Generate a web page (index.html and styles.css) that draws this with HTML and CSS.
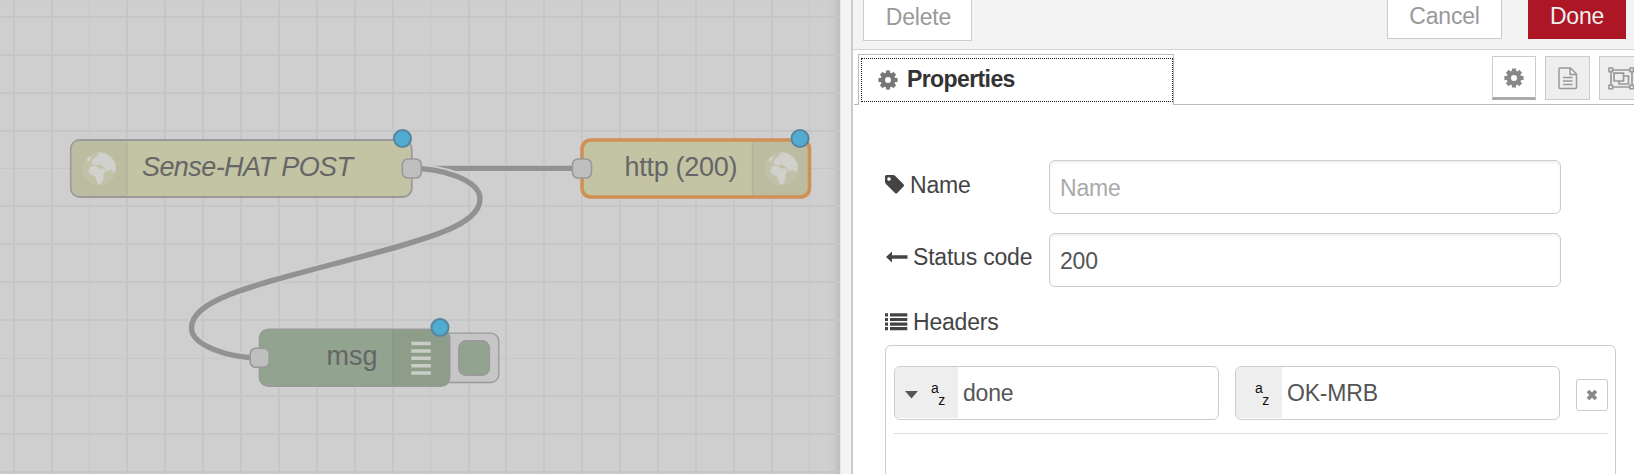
FILE: index.html
```
<!DOCTYPE html>
<html lang="en">
<head>
<meta charset="utf-8">
<title>Edit http response node</title>
<link rel="stylesheet" href="styles.css">
</head>
<body>
<div class="editor">
  <main class="workspace">
    <svg class="flow" width="840" height="474" viewBox="0 0 840 474">
      <defs>
        <g id="globe">
          <circle r="16.2" fill="#c1c1a8" stroke="#c8c8b8" stroke-width="1" stroke-dasharray="2 2"/>
          <path fill="#d1d1cc" d="M-10 -1L-7 -3-2 -2-1 0 5 0 6 3 4 6 4 10 2 15-1 16-3 12-4 8-9 6-11 3ZM-8 -5L-7 -9-3 -12 0 -16 6 -15 12 -11 16 -5 16 2 13 4 12 1 8 3 5 -1 0 -4-4 -3ZM-13 -8L-10 -12-8 -11-11 -7Z"/>
        </g>
        <g id="changed"><circle r="8.5" fill="#50acd0" stroke="#5784a0" stroke-width="2"/></g>
        <rect id="port" x="-9.5" y="-9.5" width="19" height="19" rx="5.5" fill="#bfbfbf" stroke="#999" stroke-width="1.6"/>
      </defs>
      <path class="grid" d="M14 0V474M52 0V474M127 0V474M165 0V474M203 0V474M241 0V474M279 0V474M317 0V474M355 0V474M393 0V474M469 0V474M506 0V474M544 0V474M582 0V474M620 0V474M658 0V474M696 0V474M734 0V474M772 0V474M0 17H840M0 55H840M0 93H840M0 131H840M0 206H840M0 244H840M0 282H840M0 320H840M0 396H840M0 434H840M0 472H840"/>
      <path class="grid thin" d="M89.5 0V474M430.5 0V474M809.5 0V474M0 168.5H840M0 358.5H840"/>
      <path class="wire-gap" d="M412 168.4H582"/><path class="wire" d="M412 168.4H582"/>
      <path class="wire-gap" d="M412 168.4C440 168.4 480 179 480 199C480 226 425 240 335.6 263.5C246 287 191.5 301 191.5 328C191.5 346 230 358 260 358"/>
      <path class="wire" d="M412 168.4C440 168.4 480 179 480 199C480 226 425 240 335.6 263.5C246 287 191.5 301 191.5 328C191.5 346 230 358 260 358"/>

      <rect x="70.8" y="140" width="341" height="57" rx="9" fill="#c3c4a4" stroke="#999" stroke-width="1.8"/>
      <path d="M127 141H80Q71.7 141 71.7 149V188Q71.7 196 80 196H127Z" fill="#bcbda0"/><path d="M127 142V195" stroke="#b2b39a" stroke-width="1.6"/>
      <use href="#globe" x="99.5" y="168.5"/>
      <text class="italic" x="142" y="176" textLength="211">Sense-HAT POST</text>
      <use href="#port" x="411.8" y="168.5"/><use href="#changed" x="402.5" y="138.5"/>

      <rect x="582" y="140" width="227.5" height="57" rx="9" fill="#c3c4a4"/>
      <path d="M752 141H801Q808 141 808 149V188Q808 196 801 196H752Z" fill="#bcbda0"/><path d="M752.5 142V195" stroke="#b2b39a" stroke-width="1.6"/>
      <rect x="582" y="140" width="227.5" height="57" rx="9" fill="none" stroke="#d09055" stroke-width="3.6"/>
      <use href="#globe" x="781.5" y="168.5"/>
      <text x="624.5" y="176" textLength="113">http (200)</text>
      <use href="#port" x="582" y="168.5"/><use href="#changed" x="800" y="138.5"/>

      <rect x="430" y="333.2" width="68.8" height="49.3" rx="8" fill="#c6c6c6" stroke="#999" stroke-width="1.3"/>
      <rect x="458.7" y="340.7" width="30.8" height="34.7" rx="7.5" fill="#92a38f" stroke="#999" stroke-width="1.3"/>
      <rect x="259.5" y="329.3" width="190.3" height="57" rx="9" fill="#92a38f" stroke="#999" stroke-width="1.6"/>
      <path d="M393 330H441Q449 330 449 338V378Q449 385.5 441 385.5H393Z" fill="#8e9d8a"/><path d="M393 331V385" stroke="#879685" stroke-width="1.4"/>
      <path d="M411.3 343.5H430.8M411.3 351H430.8M411.3 358.3H430.8M411.3 365.7H430.8M411.3 373H430.8" stroke="#c8cdc7" stroke-width="3.4"/>
      <text x="326.5" y="365.3" textLength="51">msg</text>
      <use href="#port" x="259.7" y="357.8"/><use href="#changed" x="440" y="327.5"/>
    </svg>
  </main>
  <div class="divider"></div>
  <aside class="tray">
    <header class="toolbar">
      <button class="btn delete">Delete</button>
      <button class="btn cancel">Cancel</button>
      <button class="btn done">Done</button>
    </header>
    <nav class="tabs">
      <div class="tab"><div class="tab-focus">
        <svg class="gear" width="20" height="20" viewBox="-10 -10 20 20"><use href="#gear"/></svg><span>Properties</span>
      </div></div>
      <div class="tab-rest">
        <span class="tool active"><svg width="20" height="20" viewBox="-10 -10 20 20"><g id="gear"><circle r="5.2" fill="none" stroke="currentColor" stroke-width="4.4"/><path d="M0-9.6V-6M0 9.6V6M-9.6 0H-6M9.6 0H6M-6.7-6.7L-4.5-4.5M6.7 6.7L4.5 4.5M-6.7 6.7L-4.5 4.5M6.7-6.7L4.5-4.5" fill="none" stroke="currentColor" stroke-width="4.2"/></g></svg></span>
        <span class="tool doc"><svg width="20" height="23" viewBox="0 0 20 23"><path d="M2 1H12.5L18.5 7V20.5Q18.5 21.5 17.5 21.5H2Q1 21.5 1 20.5V2Q1 1 2 1ZM12 1V7.5H18.5M5 10.5H14.5M5 14H14.5M5 17.5H14.5" fill="none" stroke="currentColor" stroke-width="1.5"/></svg></span>
        <span class="tool group"><svg width="27" height="23" viewBox="0 0 27 23"><path d="M3 3H24V20H3ZM6 6.2H15.5V14H6ZM15.5 9H20.5V17H11V14" fill="none" stroke="currentColor" stroke-width="1.7"/><path d="M1 1H4.6V4.6H1ZM22 1H25.6V4.6H22ZM1 18.2H4.6V21.8H1ZM22 18.2H25.6V21.8H22Z" fill="#eee" stroke="currentColor" stroke-width="1.6"/></svg></span>
      </div>
    </nav>
    <section class="form">
      <div class="row"><label class="label name-label"><svg width="20" height="20" viewBox="0 0 20 20"><path fill="currentColor" fill-rule="evenodd" d="M1.5 0H8Q9.3 0 10.3 1L18.5 9.2Q19.6 10.3 18.5 11.4L12.2 17.9Q11.1 19 10 17.9L1.2 9.2Q0 8 0 6.8V1.5Q0 0 1.5 0ZM4 2.3A1.8 1.8 0 1 0 4 5.9 1.8 1.8 0 1 0 4 2.3Z"/></svg><span>Name</span></label><div class="input placeholder">Name</div></div>
      <div class="row"><label class="label status-label"><svg width="22" height="12" viewBox="0 0 22 12"><path fill="currentColor" d="M0 6L6 .5V4.3H21.5V7.7H6V11.5Z"/></svg><span>Status code</span></label><div class="input">200</div></div>
      <div class="headers-label"><svg width="23" height="18" viewBox="0 0 23 18"><path d="M0 1.9H3M5 1.9H22.3M0 6.5H3M5 6.5H22.3M0 11.1H3M5 11.1H22.3M0 15.7H3M5 15.7H22.3" stroke="currentColor" stroke-width="3.2"/></svg><span>Headers</span></div>
      <div class="list"><div class="item">
        <div class="typed"><span class="type wide"><svg width="13" height="8" viewBox="0 0 13 8"><path fill="#555" d="M0 0H13L6.5 7.5Z"/></svg><span class="az"><i>a</i><i>z</i></span></span><span class="value">done</span></div>
        <div class="typed"><span class="type"><span class="az"><i>a</i><i>z</i></span></span><span class="value">OK-MRB</span></div>
        <button class="remove"><svg width="12" height="12" viewBox="0 0 12 12"><path d="M2 2L10 10M10 2L2 10" stroke="#888" stroke-width="3.8"/></svg></button>
      </div></div>
    </section>
  </aside>
</div>
</body>
</html>
```
FILE: styles.css
```
* { box-sizing: border-box; }
body { margin: 0; overflow: hidden; font-family: "Liberation Sans", Arial, sans-serif; font-size: 23px; letter-spacing: -0.2px; color: #444; }
button { font: inherit; letter-spacing: inherit; padding: 0; }
svg { display: block; flex: none; }
.editor { display: flex; width: 1634px; height: 474px; overflow: hidden; background: #fff; }
.workspace { width: 840px; flex: none; background: #cfcfcf; box-shadow: inset -10px 0 10px -8px #b4b4b4; }
.grid { stroke: #c6c6c6; stroke-width: 2; fill: none; }
.thin { stroke-width: 1; }
.wire { stroke: #929292; stroke-width: 5.4; fill: none; }
.wire-gap { stroke: #cfcfcf; stroke-width: 9; fill: none; }
.flow text { font-size: 27px; fill: #666; letter-spacing: 0; }
.flow .italic { font-style: italic; }
.divider { width: 13px; flex: none; background: #f3f3f3; border-left: 1px solid #e6e6e6; border-right: 2px solid #ccc; }
.tray { flex: 1; min-width: 0; overflow: hidden; }
.toolbar { display: flex; height: 50px; background: #f3f3f3; border-bottom: 1px solid #d4d4d4; padding-left: 10px; align-items: flex-start; }
.btn { border: 1px solid #ccc; border-top: 0; background: #fff; color: #999; flex: none; }
.delete { width: 109px; height: 41px; padding: 0 0 5px 2px; }
.cancel { width: 115px; height: 39px; margin-left: 415px; padding-bottom: 6px; }
.done { width: 98px; height: 39px; margin-left: 26px; padding-bottom: 6px; background: #ad1625; border: 0; color: #eee; }
.tabs { display: flex; height: 55px; padding-top: 4px; }
.tabs::before { content: ""; width: 4px; margin-left: 1px; border-bottom: 1px solid #bbb; }
.tab { width: 316px; height: 51px; border: 1px solid #bbb; border-bottom: 0; padding: 3px 0 3px 2px; flex: none; }
.tab-focus { height: 44px; border: 1px dotted #222; display: flex; align-items: center; gap: 9px; padding: 0 0 1px 16px; font-weight: bold; letter-spacing: -0.6px; color: #333; }
.gear { color: #777; }
.tab-rest { flex: 1; display: flex; align-items: flex-start; padding: 2px 0 0 318px; border-bottom: 1px solid #bbb; min-width: 0; }
.tool { height: 44px; width: 45px; border: 1px solid #ccc; background: #eee; color: #999; display: flex; align-items: center; justify-content: center; flex: none; margin-right: 9px; }
.active { width: 44px; background: #fff; border-bottom: 3px solid #aaa; padding-top: 2px; color: #888; }
.group { justify-content: flex-start; padding-left: 8px; width: 48px; margin-right: 0; }
.form { padding: 55px 0 0 32px; }
.row { display: flex; height: 54px; margin-bottom: 19px; }
.label { width: 164px; display: flex; align-items: center; flex: none; padding-bottom: 3px; }
.name-label { gap: 5px; }
.name-label svg { margin-top: -1px; }
.status-label { gap: 5px; padding-left: 1px; padding-bottom: 5px; }
.status-label svg { margin-top: -1px; }
.input { width: 512px; border: 1px solid #ccc; border-radius: 6px; box-shadow: inset 0 2px 3px #f1f1f1; padding: 0 10px; line-height: 54px; color: #555; }
.placeholder { color: #aaa; line-height: 55px; }
.headers-label { display: flex; gap: 5px; align-items: center; height: 26px; margin-top: 22px; }
.headers-label svg { margin-top: -1px; }
.list { width: 731px; height: 140px; margin-top: 10px; border: 1px solid #ccc; border-radius: 6px 6px 0 0; padding: 20px 7px 20px 8px; }
.item { height: 68px; border-bottom: 1px solid #ddd; display: flex; align-items: flex-start; gap: 16px; }
.typed { display: flex; width: 325px; height: 54px; border: 1px solid #ccc; border-radius: 6px; overflow: hidden; line-height: 53px; color: #555; flex: none; }
.typed + .typed { width: 325px; }
.type { width: 46px; height: 51px; background: #eee; display: flex; align-items: center; padding-left: 19px; margin-right: 5px; }
.wide { width: 63px; padding-left: 10px; gap: 14px; }
.wide svg { margin-top: 5px; }
.az { width: 14px; display: flex; flex-direction: column; line-height: 12px; font-size: 14px; color: #111; padding-top: 3px; }
.wide .az { margin-left: -1px; }
.az i { font-style: normal; }
.az i + i { align-self: flex-end; }
.remove { width: 32px; height: 32px; margin-top: 13px; background: #fff; border: 1px solid #ccc; border-radius: 3px; display: flex; align-items: center; justify-content: center; flex: none; }
```
